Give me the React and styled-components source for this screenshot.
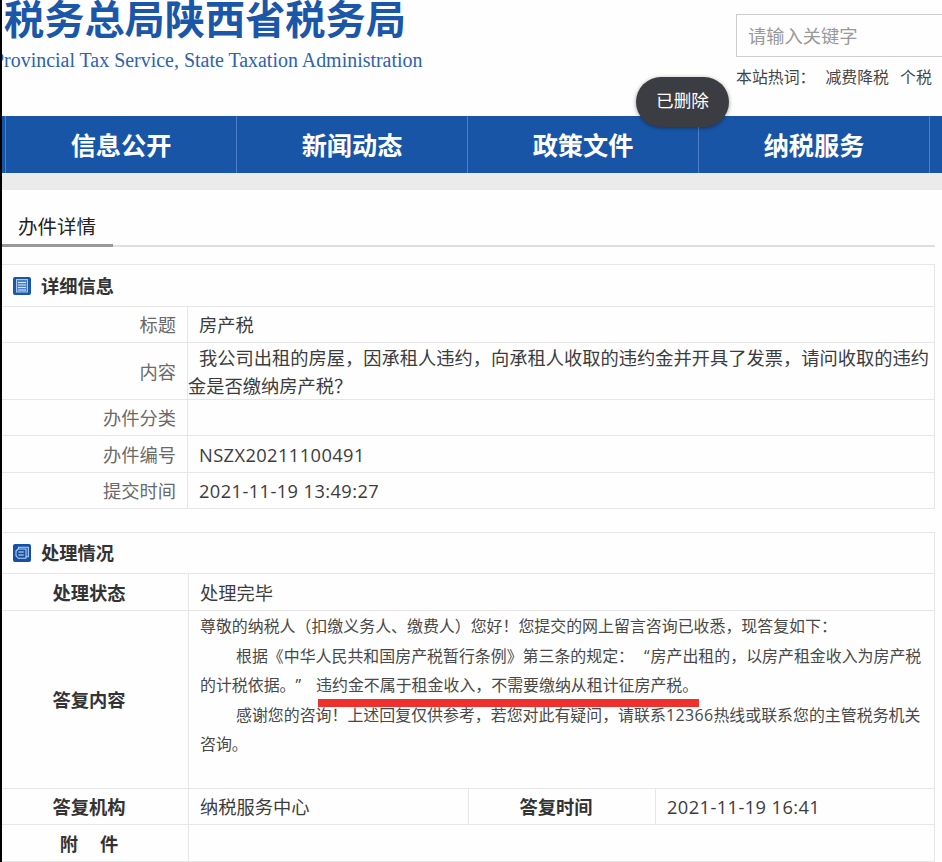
import React from "react";
import styled, { createGlobalStyle } from "styled-components";

const menu = ["信息公开", "新闻动态", "政策文件", "纳税服务"];

const details = [
  { label: "标题", value: "房产税", height: 36 },
  {
    label: "内容",
    value: "我公司出租的房屋，因承租人违约，向承租人收取的违约金并开具了发票，请问收取的违约",
    rest: "金是否缴纳房产税？",
    height: 57,
  },
  { label: "办件分类", value: "", height: 36 },
  { label: "办件编号", value: "NSZX20211100491", height: 37, spacing: 0.42 },
  { label: "提交时间", value: "2021-11-19 13:49:27", height: 36, spacing: 0.42 },
];

function DetailIcon() {
  return (
    <svg width="18" height="18" viewBox="0 0 18 18">
      <rect width="18" height="18" rx="2" fill="#1b57a6" />
      <rect x="3.5" y="2.5" width="11" height="12.5" fill="#4a80c9" stroke="#a9c8f0" strokeWidth="1" />
      <path d="M5 5.5h8M5 8h8M5 10.5h8M5 13h8" stroke="#d6e6fc" strokeWidth="1" />
    </svg>
  );
}

function ProcessIcon() {
  return (
    <svg width="18" height="18" viewBox="0 0 18 18">
      <rect width="18" height="18" rx="2" fill="#1650a3" />
      <path
        d="M5.5 4.5V3.2h9.8v9.6h-2M5 5h8v9.3H5.4L3 11.8V7z"
        fill="none"
        stroke="#b9d1f3"
        strokeWidth="1.1"
      />
      <path d="M5.4 8h5.4M5.4 11h5.4" stroke="#d8e7fc" strokeWidth="1.2" />
    </svg>
  );
}

export default function App() {
  return (
    <>
      <GlobalStyle />
      <Page>
        <Header>
          <Brand>
            <h1>税务总局陕西省税务局</h1>
            <EnglishName>Provincial Tax Service, State Taxation Administration</EnglishName>
          </Brand>
          <Search>
            <SearchInput>请输入关键字</SearchInput>
            <HotWords>
              <span>本站热词：</span>
              <span>减费降税</span>
              <span>个税</span>
            </HotWords>
          </Search>
        </Header>
        <Nav>
          {menu.map((item) => (
            <NavItem key={item}>{item}</NavItem>
          ))}
          <NavItem />
        </Nav>
        <Tabs>
          <Tab>办件详情</Tab>
        </Tabs>

        <Panel>
          <PanelTitle height={41}>
            <DetailIcon />
            <h2>详细信息</h2>
          </PanelTitle>
          {details.map((row) => (
            <Row key={row.label} height={row.height}>
              <Label>{row.label}</Label>
              <Value spacing={row.spacing}>
                <Line>{row.value}</Line>
                {row.rest && <div>{row.rest}</div>}
              </Value>
            </Row>
          ))}
        </Panel>

        <Panel>
          <PanelTitle height={40}>
            <ProcessIcon />
            <h2>处理情况</h2>
          </PanelTitle>
          <Row height={37}>
            <Heading>处理状态</Heading>
            <Cell>处理完毕</Cell>
          </Row>
          <Row height={178}>
            <Heading>答复内容</Heading>
            <Answer>
              <p>尊敬的纳税人（扣缴义务人、缴费人）您好！您提交的网上留言咨询已收悉，现答复如下：</p>
              <Indented>
                根据《中华人民共和国房产税暂行条例》第三条的规定：<Open>“</Open>房产出租的，以房产租金收入为房产税
              </Indented>
              <p>
                的计税依据。<Close>”</Close>
                <Marked>违约金不属于租金收入，不需要缴纳从租计征房产税。</Marked>
              </p>
              <Indented>
                感谢您的咨询！上述回复仅供参考，若您对此有疑问，请联系<Phone>12366</Phone>热线或联系您的主管税务机关
              </Indented>
              <p>咨询。</p>
            </Answer>
          </Row>
          <Row height={36}>
            <Heading>答复机构</Heading>
            <Cell width={280}>纳税服务中心</Cell>
            <Heading width={187}>答复时间</Heading>
            <Cell spacing={0.42}>2021-11-19 16:41</Cell>
          </Row>
          <Row height={37}>
            <Heading>
              附<Gap />件
            </Heading>
            <Cell />
          </Row>
        </Panel>
        <Toast>已删除</Toast>
      </Page>
    </>
  );
}

const GlobalStyle = createGlobalStyle`
  * {
    box-sizing: border-box;
  }
  body {
    margin: 0;
    background: #fff;
    overflow: hidden;
  }
  h1, h2, p {
    margin: 0;
  }
`;
const Page = styled.div`
  position: relative;
  width: 942px;
  height: 862px;
  overflow: hidden;
  border-left: 2px solid #000;
  background-color: #fefefe;
  color: #3c3c3c;
  font-family: "Open Sans", "Noto Sans CJK SC", sans-serif;
  font-size: 18.25px;
  white-space: nowrap;
  text-spacing-trim: space-all;
`;
const Header = styled.header`
  height: 116px;
  display: flex;
  justify-content: space-between;
`;
const Brand = styled.div`
  color: #1b57a8;
  h1 {
    margin-left: 2px;
    height: 45px;
    font-family: "Noto Sans CJK SC", sans-serif;
    font-size: 40.2px;
    line-height: 33px;
    font-weight: 700;
  }
`;
const EnglishName = styled.div`
  margin-left: -9px;
  color: #2d62ae;
  font-family: "Liberation Serif", serif;
  font-size: 19.95px;
  line-height: 30px;
`;
const Search = styled.div`
  width: 206px;
  padding-top: 14px;
`;
const SearchInput = styled.div`
  height: 43px;
  width: 220px;
  padding-left: 11px;
  border: 1px solid #ccc;
  color: #999;
  font-size: 18.25px;
  line-height: 41px;
`;
const HotWords = styled.div`
  display: flex;
  gap: 11px;
  color: #444;
  font-size: 15.9px;
  line-height: 40px;
  span:first-child {
    margin-right: -1px;
  }
`;
const Nav = styled.nav`
  display: flex;
  height: 57px;
  padding-left: 3px;
  background-color: #1955a6;
`;
const NavItem = styled.div`
  flex: 0 0 231px;
  border-left: 1px solid #4c7fc5;
  color: #fff;
  font-size: 25.2px;
  font-weight: 700;
  line-height: 58px;
  text-align: center;
`;
const Tabs = styled.div`
  height: 91px;
  border-top: 17px solid #ebebeb;
  background: linear-gradient(#dedede, #dedede) 0 55px / 933px 2px no-repeat;
`;
const Tab = styled.div`
  width: 111px;
  height: 57px;
  padding-left: 16px;
  border-bottom: 3px solid #999;
  color: #222;
  font-size: 19.5px;
  line-height: 73px;
`;
const Panel = styled.section`
  width: 933px;
  margin-bottom: 23px;
  border-top: 1px solid #e6e6e6;
  border-right: 1px solid #e6e6e6;
`;
const PanelTitle = styled.div`
  display: flex;
  align-items: center;
  gap: 11px;
  height: ${(props) => props.height + 1}px;
  padding-left: 11px;
  border-bottom: 1px solid #e6e6e6;
  h2 {
    margin-left: -1px;
    color: #333;
    font-size: 18.25px;
    line-height: 40px;
    font-weight: 700;
  }
`;
const Row = styled.div`
  display: flex;
  height: ${(props) => props.height}px;
  border-bottom: 1px solid #e6e6e6;
`;
const Label = styled.div`
  display: flex;
  align-items: center;
  justify-content: flex-end;
  flex: 0 0 186px;
  padding-right: 11px;
  padding-bottom: 1px;
  border-right: 1px solid #e6e6e6;
  color: #6a6a6a;
`;
const Value = styled.div`
  display: flex;
  flex-direction: column;
  justify-content: center;
  padding-top: 1px;
  letter-spacing: ${(props) => props.spacing || 0}px;
  line-height: 28px;
`;
const Line = styled.div`
  padding-left: 11px;
`;
const Heading = styled.div`
  display: flex;
  align-items: center;
  justify-content: center;
  flex: 0 0 ${(props) => props.width || 187}px;
  padding-right: 12px;
  padding-bottom: 1px;
  border-right: 1px solid #e6e6e6;
  color: #333;
  font-weight: 700;
`;
const Cell = styled.div`
  display: flex;
  align-items: center;
  width: ${(props) => (props.width ? props.width + "px" : "auto")};
  padding-left: 11px;
  padding-bottom: 1px;
  border-right: ${(props) => (props.width ? "1px solid #e6e6e6" : "none")};
  letter-spacing: ${(props) => props.spacing || 0}px;
`;
const Answer = styled.div`
  padding-top: 1px;
  padding-left: 11px;
  color: #484848;
  font-size: 15.93px;
  line-height: 29.6px;
`;
const Indented = styled.p`
  padding-left: 36px;
`;
const Open = styled.span`
  margin-left: 10px;
  margin-right: 1px;
`;
const Close = styled.span`
  margin-right: 15px;
`;
const Phone = styled.span`
  letter-spacing: 0.4px;
`;
const Marked = styled.span`
  position: relative;
  &::after {
    content: "";
    position: absolute;
    left: 2px;
    top: 25px;
    width: 381px;
    height: 8px;
    background-color: #ee312d;
  }
`;
const Gap = styled.span`
  width: 22px;
`;
const Toast = styled.div`
  position: absolute;
  left: 634px;
  top: 77px;
  width: 93px;
  height: 50px;
  border-radius: 25px;
  background-color: #3b3d42;
  box-shadow: 0 1px 4px rgba(0, 0, 0, 0.4);
  color: #fff;
  font-size: 17.6px;
  line-height: 47px;
  text-align: center;
`;
